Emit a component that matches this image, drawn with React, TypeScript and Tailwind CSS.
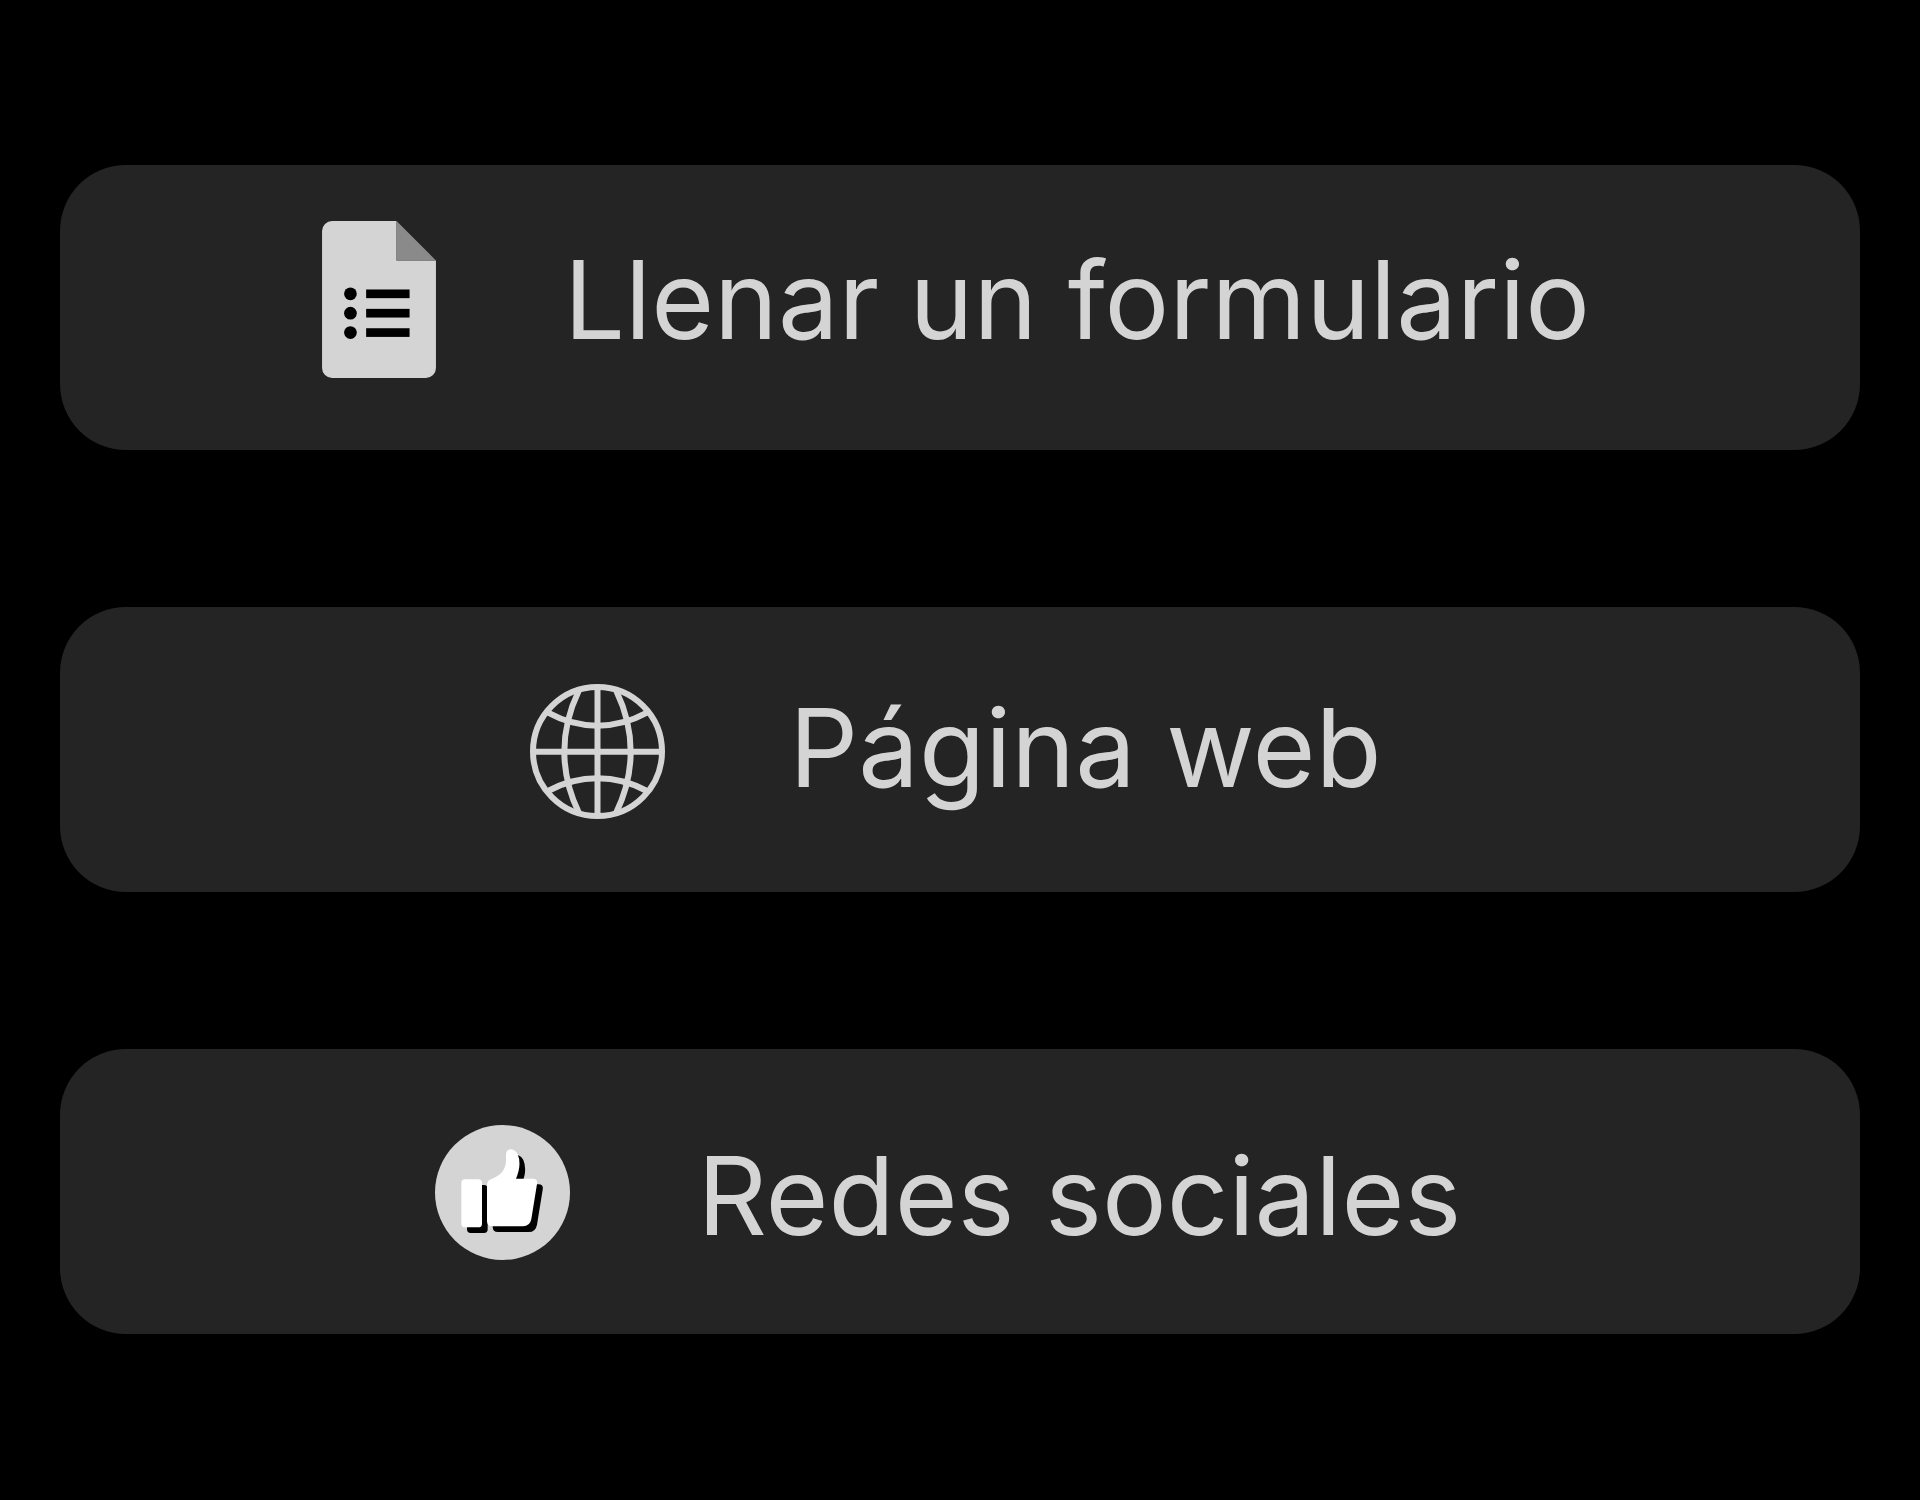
import type { ReactNode } from "react";

function FormIcon() {
  return (
    <svg viewBox="67 63 341 470" className="h-[157px] w-[114px] shrink-0" aria-hidden="true">
      <path d="M97 63H290V181H408V503A30 30 0 0 1 378 533H97A30 30 0 0 1 67 503V93A30 30 0 0 1 97 63Z" fill="#d4d4d4" />
      <path d="M290 63L408 181H290Z" fill="#8a8a8a" />
      {[281, 339, 397].map((y) => (
        <g key={y} fill="#000">
          <circle cx="152" cy={y} r="19" />
          <rect x="199" y={y - 13} width="130" height="26" />
        </g>
      ))}
    </svg>
  );
}

function GlobeIcon() {
  return (
    <svg viewBox="60 24 405 426" className="h-[142px] w-[135px] shrink-0" fill="none" stroke="#d4d4d4" strokeWidth="18" aria-hidden="true">
      <circle cx="262.5" cy="247.5" r="193.5" />
      <path d="M262.5 54V441M69 248H456" />
      <path d="M206 66Q163 155 163 248T206 430" />
      <path d="M319 66Q362 155 362 248T319 430" />
      <path d="M114 131Q185 170 262.5 170T411 131" />
      <path d="M114 366Q185 328 262.5 328T411 366" />
    </svg>
  );
}

function LikeIcon() {
  const thumb =
    "M192 225Q192 209 207 205Q249 190 249 150V133Q249 117 264 117Q277 118 284 132Q297 162 279 205H330Q345 205 342 221L325 326Q321 348 300 348H208Q192 348 192 332Z";
  return (
    <svg viewBox="36 44 405 426" className="h-[142px] w-[135px] shrink-0" aria-hidden="true">
      <circle cx="238.5" cy="246.5" r="202.5" fill="#d4d4d4" />
      <g transform="translate(17 17)" fill="#000">
        <rect x="115" y="207" width="62" height="144" rx="11" />
        <path d={thumb} />
      </g>
      <rect x="115" y="207" width="62" height="144" rx="11" fill="#fff" />
      <path d={thumb} fill="#fff" />
    </svg>
  );
}

function LinkCard({ href, icon, label, className }: { href: string; icon: ReactNode; label: string; className: string }) {
  return (
    <a href={href} className={`flex min-h-[285px] items-center justify-center rounded-[66px] bg-[#242424] ${className}`}>
      {icon}
      <span className="whitespace-nowrap text-[108px] leading-[128px]">{label}</span>
    </a>
  );
}

export default function App() {
  return (
    <main className="min-h-screen bg-black px-[60px] py-[165px] font-['Inter',sans-serif] text-[#d4d4d4]">
      <nav className="flex flex-col gap-[157px]">
        <LinkCard href="#formulario" icon={<FormIcon />} label="Llenar un formulario" className="gap-32 pr-2 pb-4" />
        <LinkCard href="#web" icon={<GlobeIcon />} label="Página web" className="gap-31 pr-2 pb-1" />
        <LinkCard href="#redes" icon={<LikeIcon />} label="Redes sociales" className="gap-32 pt-2 pr-6" />
      </nav>
    </main>
  );
}
